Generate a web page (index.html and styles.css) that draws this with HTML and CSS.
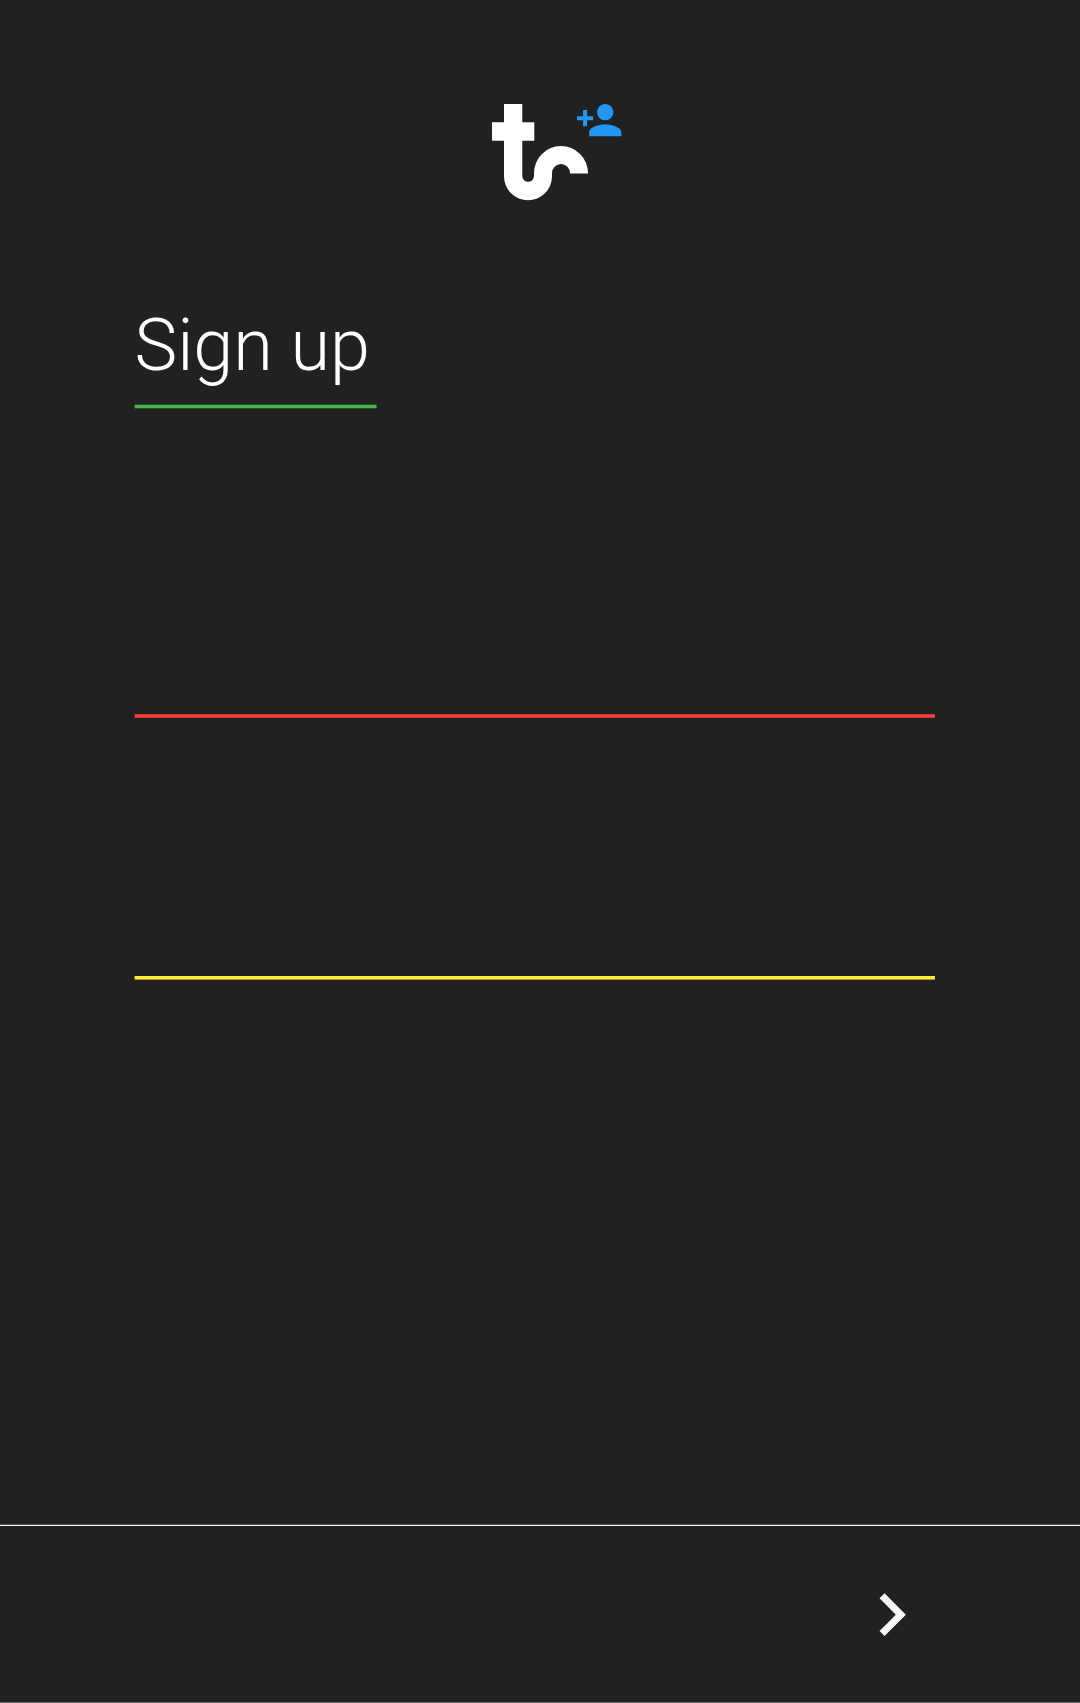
FILE: index.html
```html
<!DOCTYPE html>
<html lang="en">
<head>
<meta charset="utf-8">
<title>Sign up</title>
<link rel="stylesheet" href="styles.css">
</head>
<body>
<main class="screen">
  <header class="brand">
    <svg class="logo" viewBox="492 104 96 97" aria-hidden="true">
      <path d="M504 104h18.3v18.3h12v18.4h-12V176a5.85 5.85 0 0 0 11.7 0v-3a27 27 0 0 1 54 0v.5h-18V173a9 9 0 0 0-18 0v3.3a24 24 0 0 1-48 0v-35.6h-12v-18.4h12z"/>
    </svg>
    <svg class="add-user" viewBox="0 0 24 24" aria-hidden="true">
      <path d="M15 12c2.21 0 4-1.79 4-4s-1.79-4-4-4-4 1.79-4 4 1.79 4 4 4zm-9-2V7H4v3H1v2h3v3h2v-3h3v-2H6zm9 4c-2.67 0-8 1.34-8 4v2h16v-2c0-2.66-5.33-4-8-4z"/>
    </svg>
  </header>
  <section class="form">
    <h1 class="title">Sign up</h1>
    <svg class="rule rule-green" aria-hidden="true"><rect x=".6" y=".7" width="242" height="3.6"/></svg>
    <div class="field field-first"></div>
    <svg class="rule rule-red" aria-hidden="true"><rect x=".6" y=".2" width="800.3" height="3.6"/></svg>
    <div class="field field-second"></div>
    <svg class="rule rule-yellow" aria-hidden="true"><rect x=".6" y="0" width="800.3" height="3.6"/></svg>
  </section>
  <footer class="footer">
    <svg class="next" viewBox="0 0 24 24" aria-hidden="true">
      <path d="M10 6L8.59 7.41 13.17 12l-4.58 4.59L10 18l6-6z"/>
    </svg>
  </footer>
</main>
</body>
</html>
```
FILE: styles.css
```css
* { box-sizing: border-box; }

body {
  margin: 0;
  background: #212121;
  color: #fff;
  font-family: Roboto, "Liberation Sans", sans-serif;
}

.screen {
  display: flex;
  flex-direction: column;
  height: 1703px;
}

.brand {
  position: relative;
  height: 201px;
  padding: 104px 0 0 492px;
}

.logo {
  display: block;
  width: 96px;
  height: 97px;
  fill: #fff;
}

.add-user {
  position: absolute;
  left: 575px;
  top: 96.3px;
  width: 48.4px;
  height: 48.4px;
  fill: #2196f3;
}

.form {
  display: flex;
  flex: 1;
  flex-direction: column;
  padding: 102px 144px 0 134px;
}

.title {
  height: 101px;
  margin: 0;
  padding-left: .5px;
  font-size: 72px;
  font-weight: 300;
  line-height: 86px;
  white-space: nowrap;
}

.rule {
  display: block;
  width: 802px;
  height: 5px;
}

.rule-green { fill: #4caf50; }
.rule-red { fill: #f44336; }
.rule-yellow { fill: #ffeb3b; }

.field-first { height: 305px; }
.field-second { height: 257px; }

.footer {
  display: flex;
  justify-content: flex-end;
  height: 178px;
  padding: 46.4px 146.2px 0 0;
  border-top: 1px solid #fff;
  border-bottom: 1px solid #6a6a6a;
  box-shadow: 0 -1px #4d4d4d;
}

.next {
  width: 85.3px;
  height: 85.3px;
  fill: #f5f5f5;
}
```
